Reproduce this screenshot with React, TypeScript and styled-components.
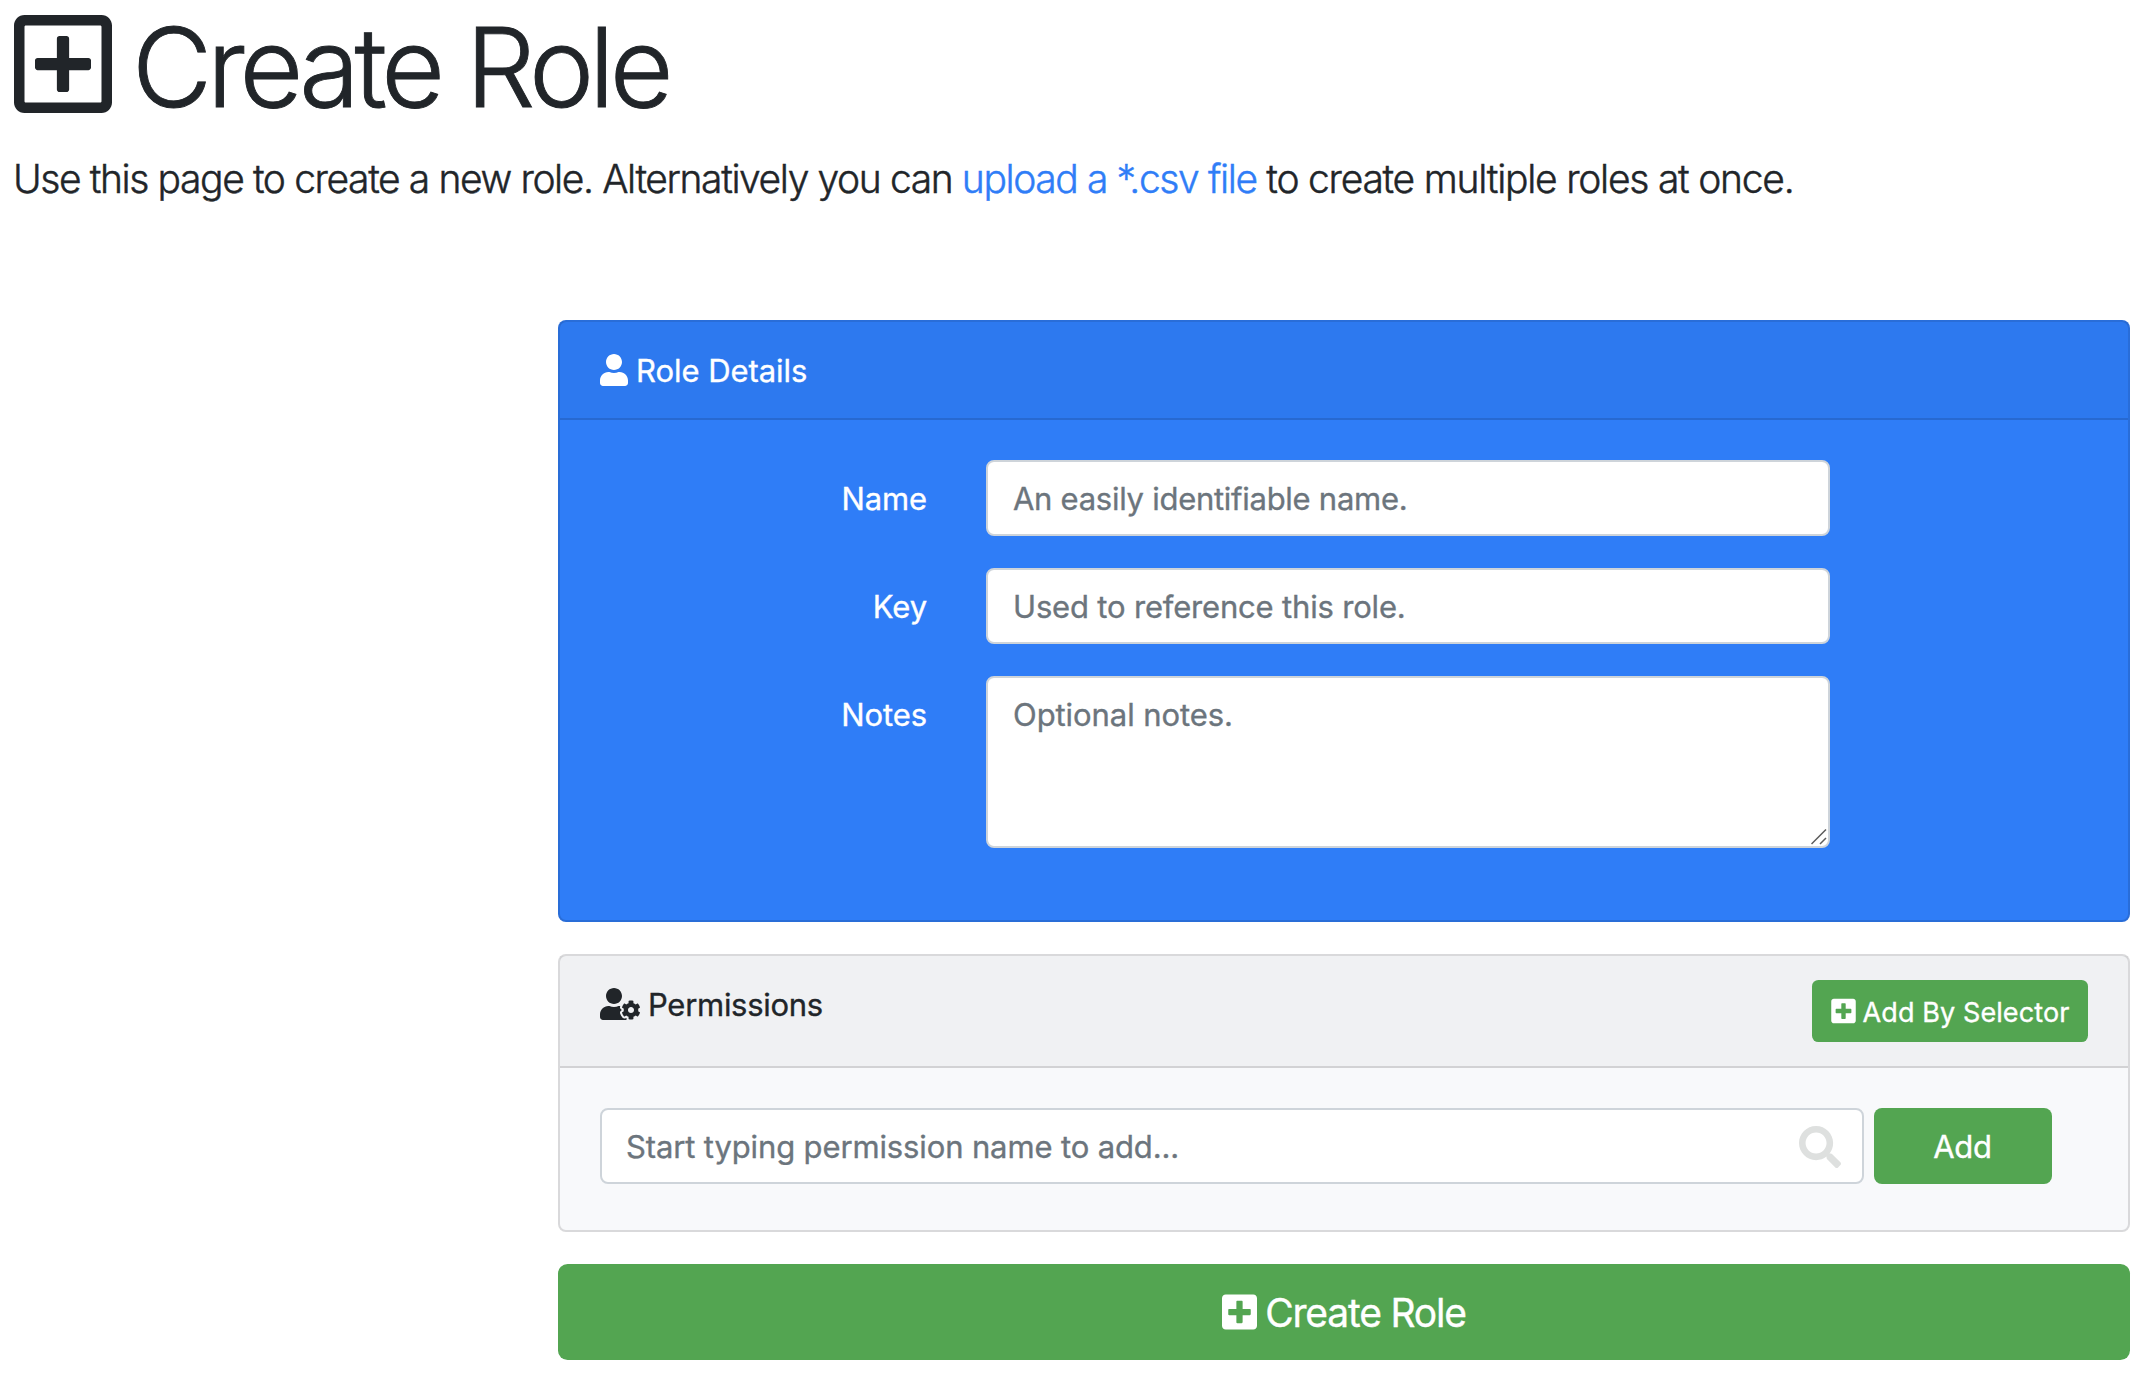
import React from "react";
import styled, { createGlobalStyle, css } from "styled-components";
import { FaPlusSquare, FaRegPlusSquare, FaSearch, FaUser, FaUserCog } from "react-icons/fa";

const GlobalStyle = createGlobalStyle`
  *, *::before, *::after { box-sizing: border-box; }
  body {
    margin: 0;
    background: #fff;
    color: #212529;
    font-family: Inter, "Liberation Sans", sans-serif;
    font-size: 31px;
    font-weight: 400;
    line-height: 48px;
    -webkit-text-stroke: 0.35px currentColor;
  }
`;

const Page = styled.main`
  padding: 0 22px 28px 14px;
`;

const Title = styled.h1`
  display: flex;
  align-items: center;
  height: 134px;
  margin: 0 0 16px;
  font-size: 110px;
  font-weight: 300;
  line-height: 131px;
  letter-spacing: -5.12px;
  -webkit-text-stroke: 0.9px currentColor;
`;

const Lead = styled.p`
  height: 60px;
  margin: 0 0 110px -1px;
  font-size: 39px;
  font-weight: 300;
  line-height: 57px;
  white-space: nowrap;
  letter-spacing: -1.4px;
  -webkit-text-stroke: 0.45px currentColor;
`;

const LeadTail = styled.span`
  letter-spacing: -1.25px;
`;

const Link = styled.a`
  color: #2f7df7;
  text-decoration: none;
`;

const Icon = styled.span<{ $w: number; $h: number; $gap: number; $shift?: number }>`
  display: inline-flex;
  flex: none;
  width: ${(p) => p.$w}px;
  height: ${(p) => p.$h}px;
  margin: ${(p) => p.$shift ?? 0}px ${(p) => p.$gap}px 0 0;

  svg {
    width: 100%;
    height: 100%;
  }
`;

const Form = styled.form`
  display: flex;
  flex-direction: column;
  gap: 32px;
  margin-left: 544px;
`;

const Card = styled.section<{ $tone: "primary" | "light" }>`
  border: 2px solid rgba(0, 0, 0, 0.125);
  border-radius: 8px;
  ${(p) =>
    p.$tone === "primary"
      ? css`
          background: #2f7df7;
          color: #fff;
        `
      : css`
          background: #f8f9fb;
        `}
`;

const CardHeader = styled.header`
  display: flex;
  justify-content: space-between;
  align-items: flex-start;
  padding: 24px 40px;
  border-bottom: 2px solid rgba(0, 0, 0, 0.125);
  background: rgba(0, 0, 0, 0.03);
`;

const CardTitle = styled.div<{ $tracking?: number }>`
  display: flex;
  align-items: center;
  height: 48px;
  letter-spacing: ${(p) => p.$tracking ?? 0}px;
`;

const Caption = styled.span`
  padding-top: 2px;
`;

const Fields = styled.div`
  display: grid;
  grid-template-columns: 327px 844px;
  column-gap: 59px;
  row-gap: 32px;
  padding: 40px 40px 72px 40px;
`;

const Label = styled.label`
  padding-top: 15px;
  text-align: right;
  letter-spacing: -0.1px;
`;

const controlStyle = css<{ $tracking?: number }>`
  display: block;
  width: 100%;
  padding: 12px 24px 12px 25px;
  border: 2px solid #ced4da;
  border-radius: 8px;
  background: #fff;
  color: #495057;
  font: inherit;
  letter-spacing: ${(p) => p.$tracking ?? 0}px;
  outline: none;

  &::placeholder {
    color: #6c757d;
    opacity: 1;
    -webkit-text-stroke: 0.35px #6c757d;
  }
`;

const Input = styled.input<{ $tracking?: number }>`
  ${controlStyle}
  height: 76px;
`;

const TextArea = styled.textarea<{ $tracking?: number }>`
  ${controlStyle}
  height: 172px;
  padding-top: 13px;
  resize: none;
`;

const ControlWrap = styled.div`
  position: relative;
`;

const Grip = styled.svg`
  position: absolute;
  right: 3px;
  bottom: 3px;
  width: 16px;
  height: 16px;
`;

const SearchMark = styled.span`
  position: absolute;
  top: 18px;
  right: 23px;
  width: 42px;
  height: 42px;
  color: #dee0df;

  svg {
    display: block;
    width: 100%;
    height: 100%;
  }
`;

const SearchInput = styled(Input)`
  padding-left: 24px;
`;

const AddRow = styled.div`
  display: grid;
  grid-template-columns: 1264px 178px;
  column-gap: 10px;
  padding: 40px 40px 46px;
`;

const Button = styled.button<{ $size: "sm" | "md" | "lg" }>`
  display: flex;
  align-items: center;
  justify-content: center;
  border: 0;
  padding: 0;
  background: #53a551;
  color: #fff;
  font-family: inherit;
  font-weight: inherit;
  white-space: nowrap;
  ${(p) =>
    ({
      sm: css`
        width: 276px;
        height: 62px;
        border-radius: 6.4px;
        font-size: 27px;
        letter-spacing: 0.1px;
      `,
      md: css`
        height: 76px;
        padding-right: 1px;
        border-radius: 8px;
        font-size: 31px;
        letter-spacing: -0.3px;
      `,
      lg: css`
        width: 100%;
        height: 96px;
        border-radius: 9.6px;
        font-size: 39px;
        letter-spacing: -1.2px;
      `,
    })[p.$size]}
`;

export default function App() {
  return (
    <>
      <GlobalStyle />
      <Page>
        <Title>
          <Icon $w={98} $h={112} $gap={20} $shift={-6}>
            <FaRegPlusSquare />
          </Icon>
          <span>Create Role</span>
        </Title>
        <Lead>
          Use this page to create a new role. Alternatively you can <Link>upload a *.csv file</Link>
          <LeadTail> to create multiple roles at once.</LeadTail>
        </Lead>
        <Form>
          <Card $tone="primary">
            <CardHeader>
              <CardTitle $tracking={-0.05}>
                <Icon $w={28} $h={32} $gap={8}>
                  <FaUser />
                </Icon>
                <Caption>Role Details</Caption>
              </CardTitle>
            </CardHeader>
            <Fields>
              <Label htmlFor="name">Name</Label>
              <Input id="name" $tracking={-0.27} placeholder="An easily identifiable name." />
              <Label htmlFor="key">Key</Label>
              <Input id="key" $tracking={-0.18} placeholder="Used to reference this role." />
              <Label htmlFor="notes">Notes</Label>
              <ControlWrap>
                <TextArea id="notes" $tracking={-0.07} placeholder="Optional notes." />
                <Grip viewBox="0 0 16 16" fill="none" stroke="#5c5c5c" strokeWidth="1.5">
                  <path d="M0.5 15 15 0.5M9 15 15 9" />
                </Grip>
              </ControlWrap>
            </Fields>
          </Card>
          <Card $tone="light">
            <CardHeader>
              <CardTitle $tracking={-0.28}>
                <Icon $w={40} $h={32} $gap={8}>
                  <FaUserCog />
                </Icon>
                <Caption>Permissions</Caption>
              </CardTitle>
              <Button type="button" $size="sm">
                <Icon $w={25} $h={28} $gap={7}>
                  <FaPlusSquare />
                </Icon>
                <Caption>Add By Selector</Caption>
              </Button>
            </CardHeader>
            <AddRow>
              <ControlWrap>
                <SearchInput $tracking={-0.13} placeholder="Start typing permission name to add..." />
                <SearchMark>
                  <FaSearch />
                </SearchMark>
              </ControlWrap>
              <Button type="button" $size="md">
                Add
              </Button>
            </AddRow>
          </Card>
          <Button type="button" $size="lg">
            <Icon $w={35} $h={40} $gap={8}>
              <FaPlusSquare />
            </Icon>
            <span>Create Role</span>
          </Button>
        </Form>
      </Page>
    </>
  );
}
